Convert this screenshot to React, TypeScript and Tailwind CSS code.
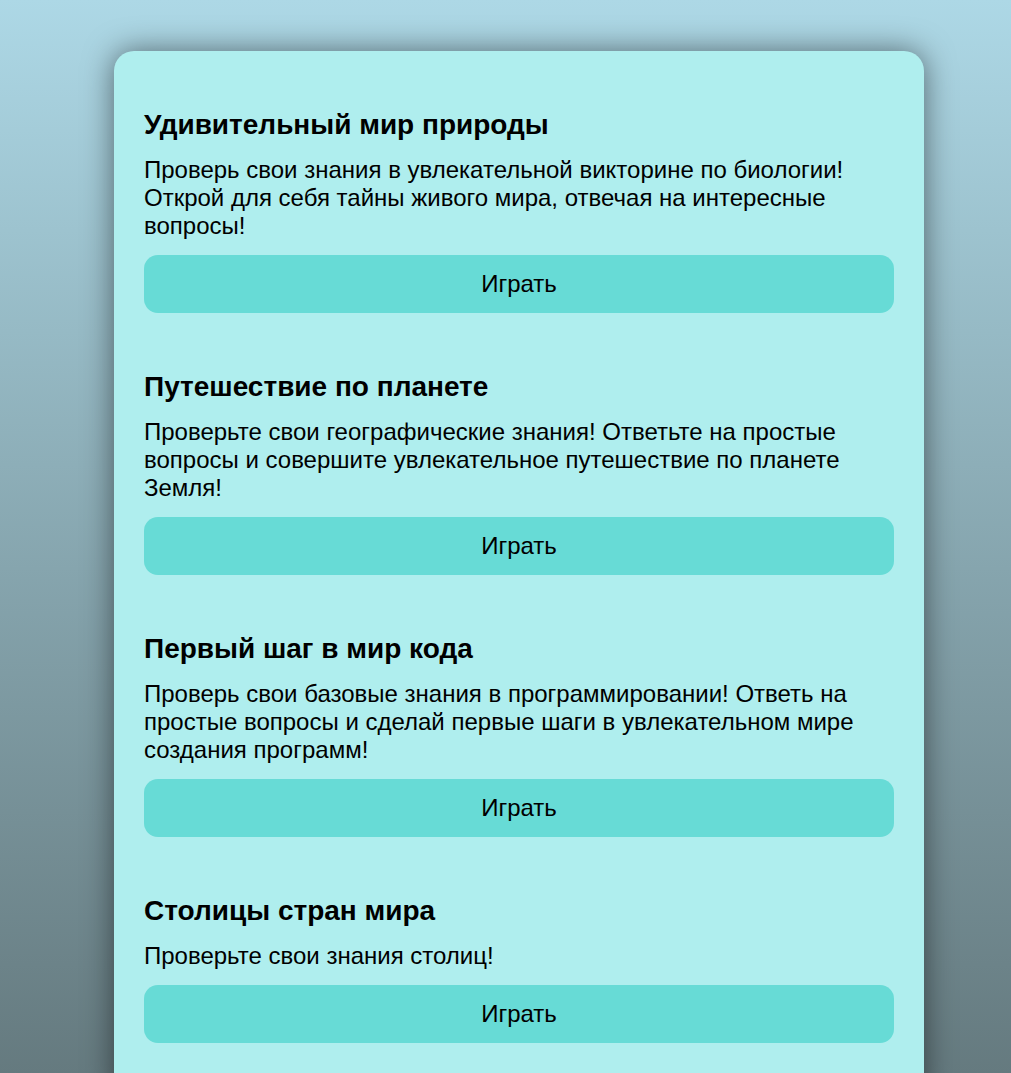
const quizzes = [
  {
    title: 'Удивительный мир природы',
    text: 'Проверь свои знания в увлекательной викторине по биологии! Открой для себя тайны живого мира, отвечая на интересные вопросы!',
  },
  {
    title: 'Путешествие по планете',
    text: 'Проверьте свои географические знания! Ответьте на простые вопросы и совершите увлекательное путешествие по планете Земля!',
  },
  {
    title: 'Первый шаг в мир кода',
    text: 'Проверь свои базовые знания в программировании! Ответь на простые вопросы и сделай первые шаги в увлекательном мире создания программ!',
  },
  {
    title: 'Столицы стран мира',
    text: 'Проверьте свои знания столиц!',
  },
]

// A single card with the list of quizzes, each one with a "play" button.
export default function App() {
  return (
    <div className="min-h-screen bg-gradient-to-b from-[#add8e6] to-[#657a7f] bg-fixed py-[51px] font-['Liberation_Sans',Arial,sans-serif] text-black">
      <div className="ml-[114px] w-[810px] rounded-[20px] bg-[#afeeee] px-[30px] pb-[58px] shadow-[0_0_30px_rgba(0,0,0,0.5)]">
        {quizzes.map((q) => (
          <div key={q.title} className="pt-[58px]">
            <h2 className="text-[28px] font-bold leading-[32px]">{q.title}</h2>
            <p className="mt-[15px] text-[24px] leading-[28px]">{q.text}</p>
            <button
              type="button"
              className="mt-[15px] h-[58px] w-full rounded-[14px] bg-[#67dbd6] text-[24px]"
            >
              Играть
            </button>
          </div>
        ))}
      </div>
    </div>
  )
}
